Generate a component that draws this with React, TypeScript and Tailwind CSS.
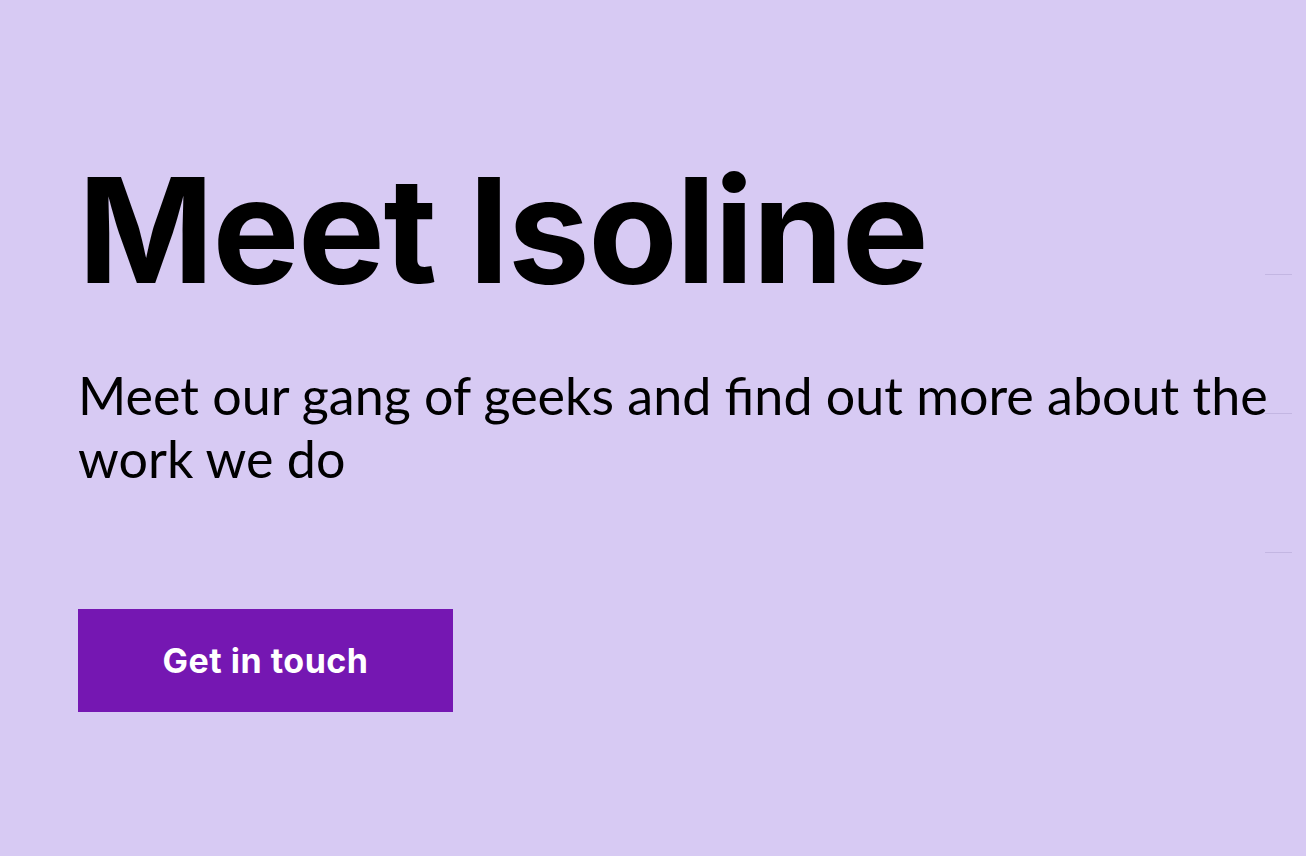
export default function App() {
  return (
    <div className="relative min-h-[856px] w-full overflow-hidden bg-[#d7caf3]">
      <div className="pl-[78px] pt-[150px]">
        <h1
          className="text-[146px] font-bold leading-[160px] tracking-[-1.5px] text-black"
          style={{ fontFamily: "Inter, 'Liberation Sans', sans-serif" }}
        >
          Meet Isoline
        </h1>
        <p
          className="mt-[54px] max-w-[1200px] text-[52px] font-normal leading-[63px] text-black"
          style={{ fontFamily: "Lato, 'Noto Sans', sans-serif" }}
        >
          Meet our gang of geeks and find out more about the work we do
        </p>
        <button
          type="button"
          className="mt-[119px] flex h-[103px] w-[375px] items-center justify-center bg-[#7517b2] text-[34px] font-bold tracking-[0.5px] text-white"
          style={{ fontFamily: "Inter, 'Liberation Sans', sans-serif" }}
        >
          Get in touch
        </button>
      </div>

      <div className="absolute left-[1265px] top-[274px] h-px w-[27px] bg-[#c3b6e2]" />
      <div className="absolute left-[1265px] top-[413px] h-px w-[27px] bg-[#c3b6e2]" />
      <div className="absolute left-[1265px] top-[552px] h-px w-[27px] bg-[#c3b6e2]" />
    </div>
  );
}
